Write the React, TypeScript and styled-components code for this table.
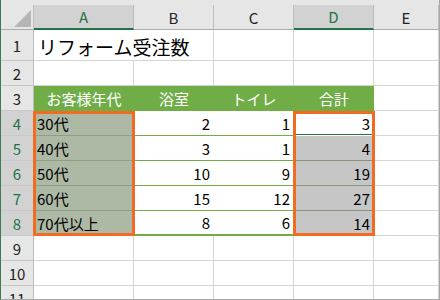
import React from "react"
import styled, { createGlobalStyle, css } from "styled-components"

const GlobalStyle = createGlobalStyle`
  html, body {
    margin: 0;
    padding: 0;
    background: #fff;
  }
  body {
    font-family: "Noto Sans CJK JP", "Noto Sans", sans-serif;
  }
`

const Window = styled.div`
  width: 440px;
  height: 300px;
  box-sizing: border-box;
  border-left: 1px solid #3d7a57;
  border-right: 1px solid #a6a6a6;
  border-bottom: 1px solid #a6a6a6;
  padding-top: 5px;
  background: #e6e6e6;
  overflow: hidden;
`

const Sheet = styled.div`
  position: relative;
  display: grid;
  grid-template-columns: 33px 100px 80px 80px 80px 65px;
  grid-template-rows: 25px 31px 25px 25px repeat(5, 25px) 25px 25px 25px;
  background: #fff;
  font-size: 15px;
  color: #000;
`

const Corner = styled.div`
  background: #e6e6e6;
  border-right: 1px solid #bdbdbd;
  border-bottom: 1px solid #ababab;
  box-sizing: border-box;
`

const ColHead = styled.div<{ $selected?: boolean }>`
  display: flex;
  align-items: center;
  justify-content: center;
  box-sizing: border-box;
  background: ${(p) => (p.$selected ? "#d2d2d2" : "#e6e6e6")};
  color: ${(p) => (p.$selected ? "#217346" : "#222")};
  border-right: 1px solid #bdbdbd;
  border-bottom: ${(p) => (p.$selected ? "2px solid #217346" : "1px solid #ababab")};
`

const RowHead = styled.div<{ $selected?: boolean }>`
  display: flex;
  align-items: center;
  justify-content: center;
  box-sizing: border-box;
  background: ${(p) => (p.$selected ? "#d2d2d2" : "#e6e6e6")};
  color: ${(p) => (p.$selected ? "#217346" : "#222")};
  border-right: 1px solid #bdbdbd;
  border-bottom: 1px solid #c8c8c8;
`

const Cell = styled.div<{ $span?: number }>`
  grid-column: span ${(p) => p.$span ?? 1};
  box-sizing: border-box;
  border-right: 1px solid #d4d4d4;
  border-bottom: 1px solid #d4d4d4;
`

const Title = styled(Cell)`
  display: flex;
  align-items: center;
  padding: 2px 4px 0;
  font-size: 19px;
  white-space: nowrap;
`

const TableHead = styled.div`
  display: flex;
  align-items: center;
  justify-content: center;
  background: #70ad47;
  color: #fff;
`

type Tone = "plain" | "label" | "active" | "sum"

const toneStyles: Record<Tone, ReturnType<typeof css>> = {
  plain: css`
    background: #fff;
    border-bottom-color: #70ad47;
  `,
  label: css`
    background: #adb9a5;
    border-bottom-color: #8f9e86;
    justify-content: flex-start;
  `,
  active: css`
    background: #fff;
    border-bottom-color: #fff;
    box-shadow: inset -3px -3px 0 -2px #217346;
  `,
  sum: css`
    background: #c6c6c6;
    border-bottom-color: #85947b;
  `,
}

const BodyCell = styled.div<{ $tone: Tone; $last?: boolean }>`
  display: flex;
  align-items: center;
  justify-content: flex-end;
  box-sizing: border-box;
  padding: 0 4px 0 3px;
  border-bottom: 1px solid;
  ${(p) => toneStyles[p.$tone]}
  ${(p) =>
    p.$last &&
    css`
      border-bottom: 2px solid #70ad47;
    `}
`

// absolutely positioned grid children take their grid area as containing block
// and are left out of auto placement
const Selection = styled.div<{ $col: number }>`
  position: absolute;
  grid-column: ${(p) => p.$col} / span 1;
  grid-row: 5 / span 5;
  top: 0;
  bottom: 0;
  left: -1px;
  right: -1px;
  border: 3px solid #f26b22;
  z-index: 2;
  pointer-events: none;
`

const columns = ["A", "B", "C", "D", "E"]
const heads = ["お客様年代", "浴室", "トイレ", "合計"]
const rows: [string, number, number, number][] = [
  ["30代", 2, 1, 3],
  ["40代", 3, 1, 4],
  ["50代", 10, 9, 19],
  ["60代", 15, 12, 27],
  ["70代以上", 8, 6, 14],
]

function App() {
  return (
    <>
      <GlobalStyle />
      <Window>
        <Sheet>
          <Corner>
            <svg width="32" height="24" viewBox="0 0 32 24">
              <polygon points="30,5 30,22 13,22" fill="#b5b5b5" />
            </svg>
          </Corner>
          {columns.map((c) => (
            <ColHead key={c} $selected={c === "A" || c === "D"}>
              {c}
            </ColHead>
          ))}

          <RowHead>1</RowHead>
          <Title $span={2}>リフォーム受注数</Title>
          <Cell />
          <Cell />
          <Cell />

          <RowHead>2</RowHead>
          {columns.map((c) => (
            <Cell key={c} />
          ))}

          <RowHead>3</RowHead>
          {heads.map((h) => (
            <TableHead key={h}>{h}</TableHead>
          ))}
          <Cell />

          {rows.map((r, i) => {
            const last = i === rows.length - 1
            return (
              <React.Fragment key={r[0]}>
                <RowHead $selected>{i + 4}</RowHead>
                <BodyCell $tone="label">{r[0]}</BodyCell>
                <BodyCell $tone="plain" $last={last}>
                  {r[1]}
                </BodyCell>
                <BodyCell $tone="plain" $last={last}>
                  {r[2]}
                </BodyCell>
                <BodyCell $tone={i === 0 ? "active" : "sum"}>{r[3]}</BodyCell>
                <Cell />
              </React.Fragment>
            )
          })}

          {[9, 10, 11].map((n) => (
            <React.Fragment key={n}>
              <RowHead>{n}</RowHead>
              {columns.map((c) => (
                <Cell key={c} />
              ))}
            </React.Fragment>
          ))}

          <Selection $col={2} />
          <Selection $col={5} />
        </Sheet>
      </Window>
    </>
  )
}

export default App
